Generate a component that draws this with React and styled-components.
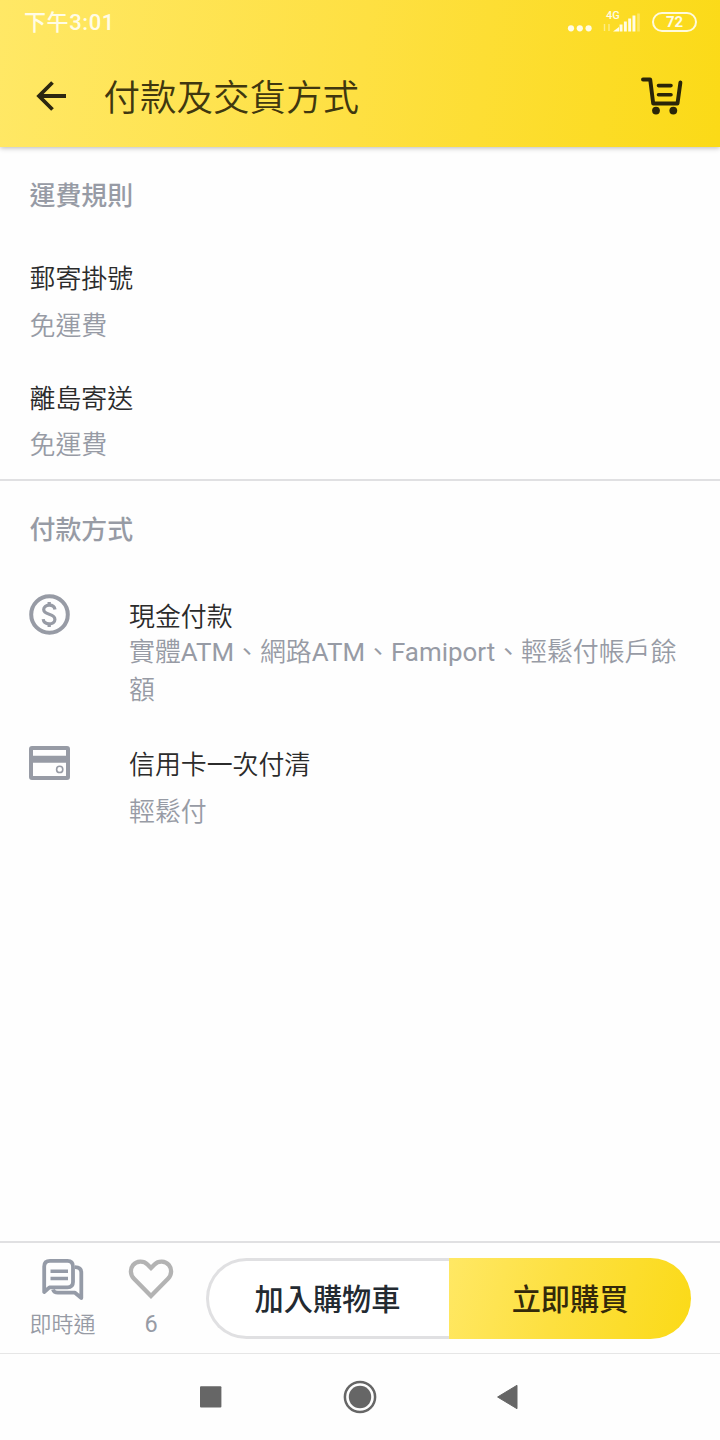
import styled, { createGlobalStyle } from "styled-components";

const GlobalStyles = createGlobalStyle`
  :root {
    --color-ink: #232a31;
    --color-text: #2b2b2b;
    --color-title: #40370f;
    --color-gray-500: #979ba5;
    --color-gray-200: #e0e0e2;
    --color-nav: #666666;
    --gradient-yellow: linear-gradient(105deg, #ffe864 0%, #fde040 45%, #fbda17 100%);
  }

  * {
    box-sizing: border-box;
    margin: 0;
    padding: 0;
  }

  body {
    font-family: Roboto, "Noto Sans CJK TC", sans-serif;
    background-color: #fefefe;
    color: var(--color-text);
  }

  svg {
    display: block;
    flex-shrink: 0;
  }
`;

const Screen = styled.div`
  display: flex;
  flex-direction: column;
  width: 720px;
  height: 1440px;
  overflow: hidden;
`;

const Header = styled.header`
  height: 147px;
  background: linear-gradient(97deg, #ffe866 0%, #fee042 50%, #fbda17 100%);
  box-shadow: 0 1px 5px rgba(0, 0, 0, 0.28);
`;

const StatusBar = styled.div`
  display: flex;
  justify-content: space-between;
  height: 44px;
  padding: 0 23px 0 24px;
  color: #fffce6;
`;

const Clock = styled.span`
  font-size: 22px;
  font-weight: 500;
  line-height: 46px;
  letter-spacing: 0.6px;
`;

const StatusIcons = styled.div`
  display: flex;
  padding-top: 8px;
`;

const Signal = styled.div`
  display: flex;
  flex-direction: column;
  width: 38px;
  margin: 0 11px;
`;

const NetworkLabel = styled.span`
  height: 5px;
  padding-left: 3px;
  font-size: 11px;
  font-weight: 500;
  line-height: 15px;
`;

const Battery = styled.span`
  width: 45px;
  height: 20px;
  margin-top: 4px;
  border: 2px solid #fffbdc;
  border-radius: 10px;
  font-size: 15px;
  font-weight: 700;
  line-height: 17px;
  text-align: center;
`;

const Toolbar = styled.div`
  display: flex;
  align-items: center;
  height: 103px;
  padding: 0 37px 0 35px;
`;

const PageTitle = styled.h1`
  flex: 1;
  margin-left: 36.5px;
  padding-top: 6px;
  font-size: 36.5px;
  font-weight: 350;
  line-height: 50px;
  color: var(--color-title);
`;

const Content = styled.main`
  flex: 1;
`;

const Section = styled.section`
  padding: 30px 29px 15px;
  border-bottom: ${(props) => (props.$divided ? "2px solid var(--color-gray-200)" : "none")};
`;

const SectionTitle = styled.h2`
  margin-bottom: ${(props) => props.$gap}px;
  padding-left: 0.5px;
  font-size: 25.9px;
  font-weight: 500;
  line-height: 38px;
  color: var(--color-gray-500);
`;

const Rule = styled.div`
  padding-left: 0.5px;

  & + & {
    margin-top: 35px;
  }
`;

const ItemTitle = styled.h3`
  font-size: 25.9px;
  font-weight: 350;
  line-height: 38px;
`;

const ItemDesc = styled.p`
  margin-top: ${(props) => (props.$tight ? "-3px" : "8.5px")};
  font-size: 25.9px;
  font-weight: 350;
  line-height: 38px;
  color: var(--color-gray-500);
`;

const Latin = styled.span`
  font-weight: 400;
`;

const Payment = styled.div`
  display: flex;
  gap: 59px;

  & + & {
    margin-top: 37px;
  }
`;

const PaymentIcon = styled.div`
  margin-top: ${(props) => props.$shift}px;
`;

const PaymentBody = styled.div`
  flex: 1;
`;

const ActionBar = styled.div`
  display: flex;
  height: 112px;
  padding: 15px 29px 0 30px;
  border-top: 2px solid var(--color-gray-200);
`;

const IconAction = styled.button`
  display: flex;
  flex-direction: column;
  align-items: center;
  width: ${(props) => props.$width}px;
  margin-right: ${(props) => props.$gap}px;
  border: none;
  background: none;
  font-family: inherit;
  font-size: ${(props) => props.$size}px;
  font-weight: ${(props) => props.$weight};
  line-height: 30px;
  color: var(--color-gray-500);
  white-space: nowrap;
`;

const IconLabel = styled.span`
  margin-top: ${(props) => props.$gap}px;
`;

const BuyGroup = styled.div`
  display: grid;
  grid-template-columns: 243px 1fr;
  flex: 1;
  height: 81px;
`;

const BuyButton = styled.button`
  padding: 0 ${(props) => (props.$primary ? 0 : 3)}px 3px 0;
  font-family: inherit;
  font-size: 29.2px;
  font-weight: 500;
  color: ${(props) => (props.$primary ? "#33290a" : "var(--color-ink)")};
  background: ${(props) => (props.$primary ? "var(--gradient-yellow)" : "#fff")};
  border: ${(props) => (props.$primary ? "none" : "3px solid var(--color-gray-200)")};
  border-right: none;
  border-radius: ${(props) => (props.$primary ? "0 41px 41px 0" : "41px 0 0 41px")};
`;

const NavBar = styled.nav`
  display: flex;
  align-items: center;
  justify-content: space-between;
  height: 87px;
  padding: 0 201px 0 200px;
  border-top: 1px solid #e6e6e6;
`;

const shippingRules = [
  { name: "郵寄掛號", fee: "免運費" },
  { name: "離島寄送", fee: "免運費" },
];

function DotsIcon() {
  return (
    <svg width="25" height="28" viewBox="0 0 25 28" fill="currentColor">
      <circle cx="4" cy="20.3" r="3.1" />
      <circle cx="12.8" cy="20.3" r="3.1" />
      <circle cx="21.6" cy="20.3" r="3.1" />
    </svg>
  );
}

function SignalIcon() {
  return (
    <svg width="38" height="20" viewBox="0 0 38 20" fill="currentColor">
      <path d="M1.5 11v7M6 11v7" stroke="currentColor" strokeWidth="1.4" opacity="0.5" />
      <path d="M10 18.5l6-4.6v4.6z" />
      <rect x="16.6" y="11.5" width="2.9" height="7" />
      <rect x="20.9" y="8.5" width="2.9" height="10" />
      <rect x="25.2" y="5.5" width="2.9" height="13" />
      <rect x="29.5" y="2.5" width="2.9" height="16" />
      <rect x="34.2" y="0.5" width="2.6" height="18" opacity="0.35" />
    </svg>
  );
}

function BackIcon() {
  return (
    <svg width="32" height="32" viewBox="0 0 32 32" fill="none" stroke="#2c2710" strokeWidth="3.8">
      <path d="M31 16H4M17.5 2.5L4 16L17.5 29.5" />
    </svg>
  );
}

function CartIcon() {
  return (
    <svg width="42" height="40" viewBox="0 0 42 40" fill="none" stroke="#2a2508" strokeWidth="3.9" strokeLinecap="round" strokeLinejoin="round">
      <path d="M2 3.5H9.2L12.2 27.5H36.5L39.4 6.5" />
      <path d="M17.5 9.6H30M17.5 18.7H30" strokeWidth="3.6" />
      <circle cx="15" cy="34.6" r="3.9" fill="#2a2508" stroke="none" />
      <circle cx="32.3" cy="34.6" r="3.9" fill="#2a2508" stroke="none" />
    </svg>
  );
}

function CashIcon() {
  return (
    <svg width="41" height="41" viewBox="0 0 41 41" fill="none" stroke="#979ba5" strokeWidth="4">
      <circle cx="20.5" cy="20.5" r="18.3" />
      <path d="M26 15.6C25.6 12.8 23.4 11.2 20.2 11.2C16.9 11.2 14.7 12.9 14.7 15.6C14.7 18.4 17 19.3 20.2 20.2C23.8 21.2 25.9 22.4 25.9 25.4C25.9 28.2 23.5 29.8 20.2 29.8C16.8 29.8 14.5 28.1 14.2 25.2" strokeWidth="3.2" />
      <path d="M20.2 8V11.5M20.2 29.5V33" strokeWidth="3.3" />
    </svg>
  );
}

function CardIcon() {
  return (
    <svg width="41" height="34" viewBox="0 0 41 34" fill="none" stroke="#979ba5">
      <rect x="2" y="2" width="37" height="30" rx="1" strokeWidth="4" />
      <path d="M2 13.2H39" strokeWidth="7" />
      <circle cx="30.7" cy="23.4" r="3.1" strokeWidth="1.6" />
    </svg>
  );
}

function ChatIcon() {
  return (
    <svg width="42" height="42" viewBox="0 0 42 42" fill="none" stroke="#959ba7" strokeWidth="3.8" strokeLinejoin="round">
      <path d="M2.2 34V8.5Q2.2 2.8 8 2.8H25.5Q31 2.8 31 8.5V24Q31 29.3 25.5 29.3H7.5Z" />
      <path d="M33 9.2Q39.3 9.2 39.3 14.5V40L33 34.7H16Q12 34.7 11 31.5" />
      <path d="M8.5 13.2H26M8.5 20.5H26" strokeWidth="3.4" />
    </svg>
  );
}

function HeartIcon() {
  return (
    <svg width="46" height="42" viewBox="0 0 46 42" fill="none" stroke="#b3b3b3" strokeWidth="4.3">
      <path d="M23 38L5.8 20.4C2.2 16.8 2 10.8 5 7.1C8.7 2.6 15.6 2.5 19.5 6.4L23 10L26.5 6.4C30.4 2.5 37.3 2.6 41 7.1C44 10.8 43.8 16.8 40.2 20.4Z" />
    </svg>
  );
}

function RecentsIcon() {
  return (
    <svg width="22" height="22" viewBox="0 0 22 22" fill="var(--color-nav)">
      <rect y="0.2" width="21.4" height="21.4" rx="1" />
    </svg>
  );
}

function HomeIcon() {
  return (
    <svg width="34" height="34" viewBox="0 0 34 34" fill="var(--color-nav)">
      <circle cx="17" cy="17" r="15.1" fill="none" stroke="var(--color-nav)" strokeWidth="2.5" />
      <circle cx="17" cy="17" r="11.2" />
    </svg>
  );
}

function NavBackIcon() {
  return (
    <svg width="22" height="26" viewBox="0 0 22 26" fill="var(--color-nav)" stroke="var(--color-nav)" strokeWidth="1" strokeLinejoin="round">
      <path d="M20 1.3V24.7L0.6 13Z" />
    </svg>
  );
}

function App() {
  return (
    <>
      <GlobalStyles />
      <Screen>
        <Header>
          <StatusBar>
            <Clock>下午3:01</Clock>
            <StatusIcons>
              <DotsIcon />
              <Signal>
                <NetworkLabel>4G</NetworkLabel>
                <SignalIcon />
              </Signal>
              <Battery>72</Battery>
            </StatusIcons>
          </StatusBar>
          <Toolbar>
            <BackIcon />
            <PageTitle>付款及交貨方式</PageTitle>
            <CartIcon />
          </Toolbar>
        </Header>

        <Content>
          <Section $divided>
            <SectionTitle $gap={45}>運費規則</SectionTitle>
            {shippingRules.map((rule) => (
              <Rule key={rule.name}>
                <ItemTitle>{rule.name}</ItemTitle>
                <ItemDesc>{rule.fee}</ItemDesc>
              </Rule>
            ))}
          </Section>

          <Section>
            <SectionTitle $gap={49}>付款方式</SectionTitle>
            <Payment>
              <PaymentIcon $shift={-4}>
                <CashIcon />
              </PaymentIcon>
              <PaymentBody>
                <ItemTitle>現金付款</ItemTitle>
                <ItemDesc $tight>
                  實體<Latin>ATM</Latin>、網路<Latin>ATM</Latin>、<Latin>Famiport</Latin>、輕鬆付帳戶餘額
                </ItemDesc>
              </PaymentBody>
            </Payment>
            <Payment>
              <PaymentIcon $shift={0}>
                <CardIcon />
              </PaymentIcon>
              <PaymentBody>
                <ItemTitle>信用卡一次付清</ItemTitle>
                <ItemDesc>輕鬆付</ItemDesc>
              </PaymentBody>
            </Payment>
          </Section>
        </Content>

        <ActionBar>
          <IconAction $width={65} $gap={33} $size={22} $weight={350}>
            <ChatIcon />
            <IconLabel $gap={10}>即時通</IconLabel>
          </IconAction>
          <IconAction $width={46} $gap={32} $size={23.5} $weight={400}>
            <HeartIcon />
            <IconLabel $gap={9}>6</IconLabel>
          </IconAction>
          <BuyGroup>
            <BuyButton>加入購物車</BuyButton>
            <BuyButton $primary>立即購買</BuyButton>
          </BuyGroup>
        </ActionBar>

        <NavBar>
          <RecentsIcon />
          <HomeIcon />
          <NavBackIcon />
        </NavBar>
      </Screen>
    </>
  );
}

export default App;
